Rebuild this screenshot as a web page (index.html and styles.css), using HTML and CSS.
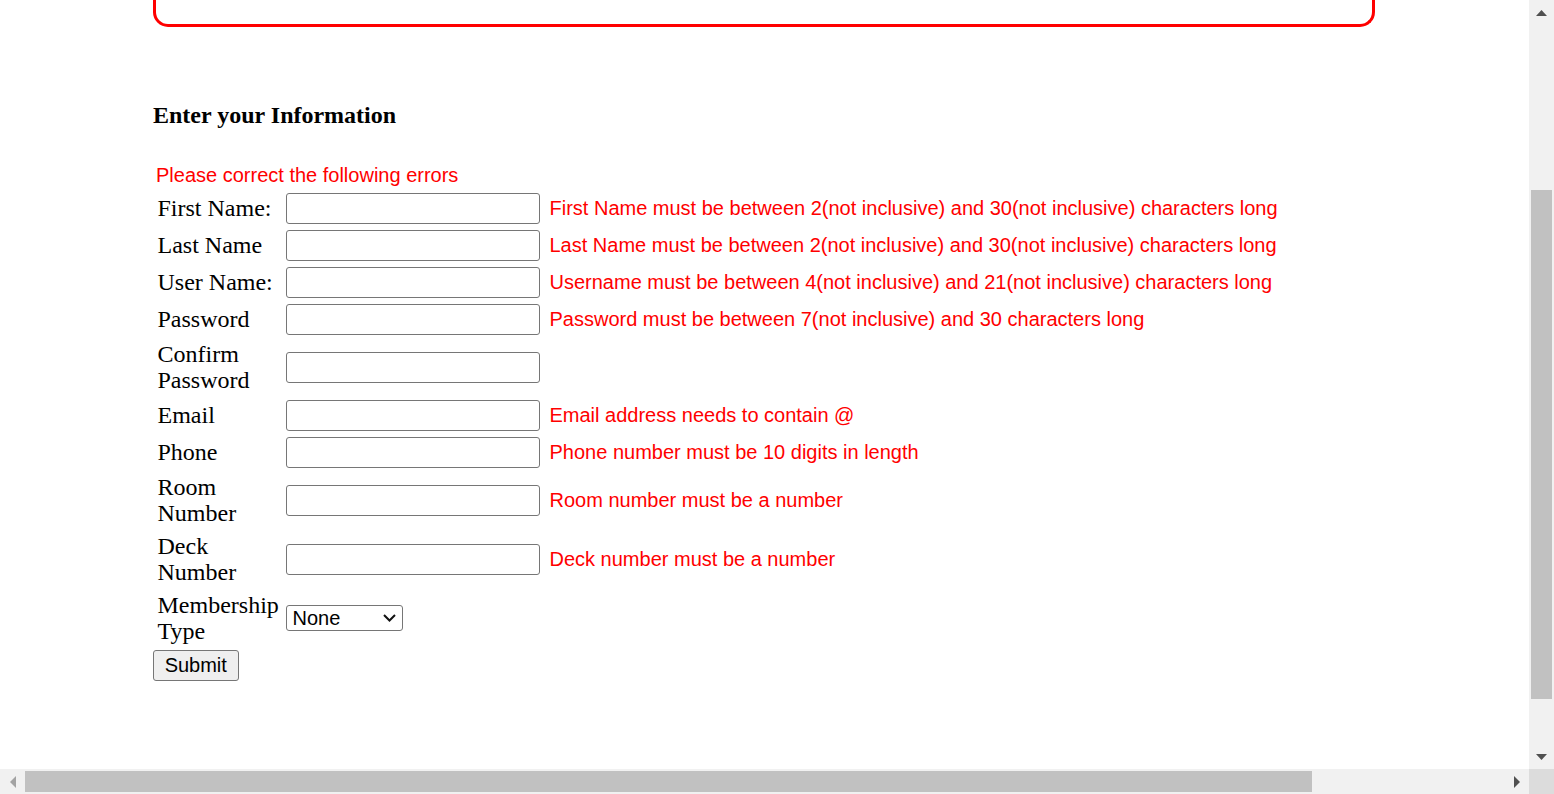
FILE: index.html
```html
<!DOCTYPE html>
<html>
<head>
<meta charset="utf-8">
<title>Enter your Information</title>
<link rel="stylesheet" href="styles.css">
</head>
<body>
<div class="viewport">
  <div class="page">
    <div class="boxend"></div>
    <h4 class="heading">Enter your Information</h4>
    <div class="errhead">Please correct the following errors</div>
    <form class="form">
      <table class="grid">
        <tr>
          <td class="lbl">First Name:</td>
          <td class="fld"><input class="inp" type="text"></td>
          <td class="err">First Name must be between 2(not inclusive) and 30(not inclusive) characters long</td>
        </tr>
        <tr>
          <td class="lbl">Last Name</td>
          <td class="fld"><input class="inp" type="text"></td>
          <td class="err">Last Name must be between 2(not inclusive) and 30(not inclusive) characters long</td>
        </tr>
        <tr>
          <td class="lbl">User Name:</td>
          <td class="fld"><input class="inp" type="text"></td>
          <td class="err">Username must be between 4(not inclusive) and 21(not inclusive) characters long</td>
        </tr>
        <tr>
          <td class="lbl">Password</td>
          <td class="fld"><input class="inp" type="password"></td>
          <td class="err">Password must be between 7(not inclusive) and 30 characters long</td>
        </tr>
        <tr>
          <td class="lbl">Confirm Password</td>
          <td class="fld"><input class="inp" type="password"></td>
          <td class="err"></td>
        </tr>
        <tr>
          <td class="lbl">Email</td>
          <td class="fld"><input class="inp" type="text"></td>
          <td class="err">Email address needs to contain @</td>
        </tr>
        <tr>
          <td class="lbl">Phone</td>
          <td class="fld"><input class="inp" type="text"></td>
          <td class="err">Phone number must be 10 digits in length</td>
        </tr>
        <tr>
          <td class="lbl">Room Number</td>
          <td class="fld"><input class="inp" type="text"></td>
          <td class="err">Room number must be a number</td>
        </tr>
        <tr>
          <td class="lbl">Deck Number</td>
          <td class="fld"><input class="inp" type="text"></td>
          <td class="err">Deck number must be a number</td>
        </tr>
        <tr>
          <td class="lbl">Membership Type</td>
          <td class="fld">
            <div class="selwrap">
              <select class="sel"><option>None</option></select>
              <svg class="chev" width="13" height="8" viewBox="0 0 13 8"><polyline points="1,1 6.5,6.5 12,1" fill="none" stroke="#111" stroke-width="2"/></svg>
            </div>
          </td>
          <td class="err"></td>
        </tr>
      </table>
      <button class="submit" type="button">Submit</button>
    </form>
  </div>
</div>
<div class="vscroll">
  <div class="varrow">
    <svg width="11" height="6" viewBox="0 0 11 6"><polygon points="5.5,0 11,6 0,6" fill="#505050"/></svg>
  </div>
  <div class="vtrack"><div class="vthumb"></div></div>
  <div class="varrow">
    <svg width="11" height="6" viewBox="0 0 11 6"><polygon points="0,0 11,0 5.5,6" fill="#505050"/></svg>
  </div>
</div>
<div class="hscroll">
  <div class="harrow">
    <svg width="6" height="12" viewBox="0 0 6 12"><polygon points="6,0 6,12 0,6" fill="#a3a3a3"/></svg>
  </div>
  <div class="htrack"><div class="hthumb"></div></div>
  <div class="harrow">
    <svg width="6" height="12" viewBox="0 0 6 12"><polygon points="0,0 6,6 0,12" fill="#505050"/></svg>
  </div>
</div>
<div class="corner"></div>
</body>
</html>
```
FILE: styles.css
```css
html, body {
  margin: 0;
  padding: 0;
}
body {
  height: 100vh;
  overflow: hidden;
  display: grid;
  grid-template-columns: 1fr 25px;
  grid-template-rows: 1fr 25px;
  background: #ffffff;
  font-family: "Liberation Serif", "Times New Roman", serif;
}
.viewport {
  overflow: hidden;
  background: #ffffff;
}
.page {
  margin-left: 153px;
  width: 1222px;
}
.boxend {
  height: 24px;
  border: 3px solid #ff0000;
  border-top: 0;
  border-radius: 0 0 15px 15px;
}
.heading {
  margin: 75px 0 35px 0;
  font-size: 24px;
  font-weight: bold;
  color: #000;
}
.errhead {
  font-family: "Liberation Sans", Arial, sans-serif;
  font-size: 20px;
  color: #ff0000;
  margin-bottom: 1px;
  padding-left: 3px;
}
.form {
  margin: 0;
}
.grid {
  border-spacing: 3px;
  border-collapse: separate;
}
.grid td {
  padding: 1.5px;
  vertical-align: middle;
}
.lbl {
  width: 122px;
  font-size: 24px;
  line-height: 26.5px;
  color: #000;
}
.fld {
  width: 254px;
}
.inp {
  display: block;
  box-sizing: border-box;
  width: 254.5px;
  height: 31px;
  margin: 0;
  border: 1px solid #767676;
  border-radius: 3px;
  background: #fff;
  font-family: "Liberation Sans", Arial, sans-serif;
  font-size: 20px;
}
.err {
  padding-left: 5px !important;
  padding-top: 2.5px !important;
  white-space: nowrap;
  font-family: "Liberation Sans", Arial, sans-serif;
  font-size: 20px;
  color: #ff0000;
}
.selwrap {
  position: relative;
  width: 117px;
  height: 26px;
}
.sel {
  -webkit-appearance: none;
  appearance: none;
  box-sizing: border-box;
  width: 117px;
  height: 26px;
  margin: 0;
  padding: 0 0 0 6px;
  border: 1px solid #767676;
  border-radius: 3px;
  background: #fff;
  color: #000;
  font-family: "Liberation Sans", Arial, sans-serif;
  font-size: 20px;
  line-height: 24px;
}
.chev {
  position: absolute;
  right: 7px;
  top: 9px;
  pointer-events: none;
}
.submit {
  display: block;
  box-sizing: border-box;
  width: 85.5px;
  height: 31px;
  margin: 1px 0 0 0;
  padding: 0 9px;
  border: 1px solid #767676;
  border-radius: 3px;
  background: #efefef;
  color: #000;
  font-family: "Liberation Sans", Arial, sans-serif;
  font-size: 20px;
}
.vscroll {
  background: #f1f1f1;
  display: flex;
  flex-direction: column;
}
.varrow {
  height: 25px;
  display: flex;
  align-items: center;
  justify-content: center;
}
.vtrack {
  flex: 1;
  padding-top: 165px;
}
.vthumb {
  margin: 0 2px;
  height: 509px;
  background: #c1c1c1;
}
.hscroll {
  background: #f1f1f1;
  display: flex;
  flex-direction: row;
}
.harrow {
  width: 25px;
  display: flex;
  align-items: center;
  justify-content: center;
}
.htrack {
  flex: 1;
  display: flex;
  align-items: center;
}
.hthumb {
  width: 1287px;
  height: 21px;
  background: #c1c1c1;
}
.corner {
  background: #dcdcdc;
}
```
